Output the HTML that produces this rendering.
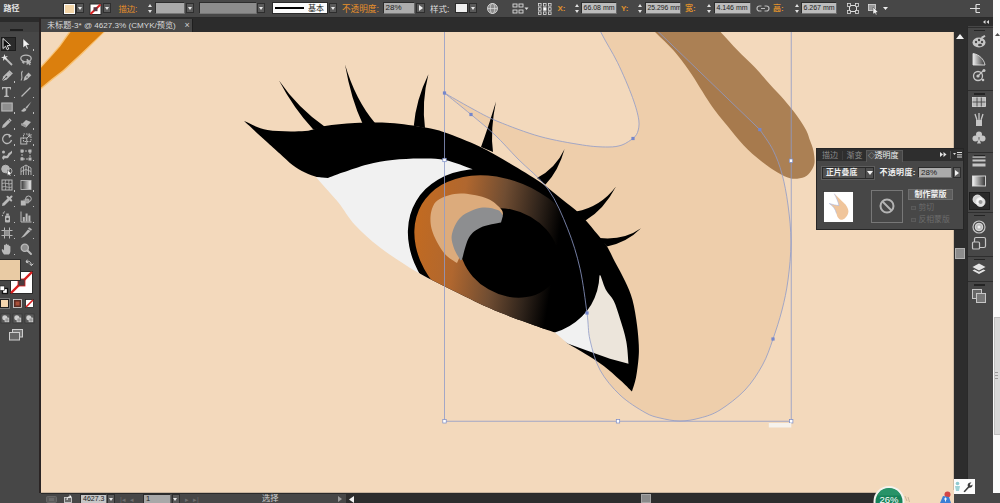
<!DOCTYPE html>
<html><head><meta charset="utf-8"><title>AI</title>
<style>
html,body{margin:0;padding:0}
body{width:1000px;height:503px;position:relative;overflow:hidden;background:#474747;font-family:"Liberation Sans","Noto Sans CJK SC",sans-serif;font-size:9px;color:#ddd}
#art{position:absolute;left:0;top:0;width:1000px;height:503px}

.a{position:absolute}
.t{position:absolute;white-space:nowrap;line-height:1}
.or{color:#e8902a}
.inp{position:absolute;overflow:hidden;background:#bcbcbc;color:#222;box-sizing:border-box;border:1px solid #2c2c2c;border-right-color:#666;border-bottom-color:#777}
.dd{position:absolute;background:#5a5a5a;box-sizing:border-box;border:1px solid #2e2e2e}
.dd:after{content:"";position:absolute;left:50%;top:50%;margin:-1px 0 0 -2.5px;border:2.5px solid transparent;border-top:3px solid #e8e8e8;border-bottom:0}
.sp{position:absolute;width:5px;height:9.5px}
.sp:before{content:"";position:absolute;left:0;top:0;border:2.5px solid transparent;border-bottom:3.5px solid #e0e0e0;border-top:0}
.sp:after{content:"";position:absolute;left:0;bottom:0;border:2.5px solid transparent;border-top:3.5px solid #e0e0e0;border-bottom:0}
svg.ic{position:absolute;overflow:visible}

</style></head><body>
<svg id="art" viewBox="0 0 1000 503">
<defs>
<clipPath id="cv"><rect x="40.8" y="31.7" width="913" height="461.1"/></clipPath>
<linearGradient id="irisg" gradientUnits="userSpaceOnUse" x1="415" y1="250" x2="553.2" y2="272.1" gradientTransform="rotate(-30.65 503.7 252.8)">
<stop offset="0" stop-color="#c06a22"/><stop offset="0.286" stop-color="#b0672f"/><stop offset="0.571" stop-color="#704d32"/><stop offset="0.82" stop-color="#30241b"/><stop offset="1" stop-color="#000"/>
</linearGradient>
<clipPath id="eyeopen"><path d="M316,177 L328,178 C330.4,177.1 335.9,174.8 342.5,172.5 C349.1,170.2 359.2,166.5 367.5,164.4 C375.8,162.3 383.8,161 392.5,160 C401.2,159 411.2,158.5 420,158.5 C428.8,158.5 436.3,158.2 445,160 C453.7,161.8 467.5,167.5 472,169 C490,150 585,205 600.6,275.6 C601.5,278 603.8,285.8 606,290 C608.2,294.2 611.4,296.2 613.8,301 C616.1,305.8 617.9,312.1 620,318.8 C622.1,325.4 624.8,333.5 626.2,341 C627.7,348.5 628.1,360 628.5,363.8 L610,358.75 L591,352 L567.5,343.5 L555,332.5 C545.8,329.2 515.8,318.9 500,312.5 C484.2,306.1 473.8,300.8 460,294 C446.2,287.2 430.3,279.8 417,272 C403.7,264.2 390.3,255.3 380,247.5 C369.7,239.7 361.9,232.4 355,225 C348.1,217.6 344,209.5 338.8,203 C333.5,196.5 327.5,190.3 323.8,186 C320,181.7 317.3,178.5 316,177 Z"/></clipPath>
<path id="nose" d="M444.5,93 C448.9,95.5 462.1,103.2 471,108 C479.9,112.8 486.5,116.8 498,121.5 C509.5,126.2 525.9,132.6 540,136.5 C554.1,140.4 571.2,143.2 582.5,145 C593.8,146.8 601.4,147 608,147 C614.6,147 617.8,146.4 622,145 C626.2,143.6 631.2,139.6 633,138.5 C633.8,137.5 636.5,135.6 637.5,132.5 C638.5,129.4 639.6,125.8 638.8,120 C637.9,114.2 636,107.1 632.5,97.5 C629,87.9 622.8,73.3 617.5,62.5 C612.2,51.7 606.2,42.9 601,32.5 C595.8,22.1 588.5,5.4 586,0 L625.3,0 L759.8,129.6 C762,133 769.3,142.6 773,150 C776.7,157.4 779.5,164.8 782,174 C784.5,183.2 786.5,193.7 788,205 C789.5,216.3 791,229.5 791,242 C791,254.5 789.5,268.7 788,280 C786.5,291.3 784.5,300.2 782,310 C779.5,319.8 776.2,329.8 773,339 C769.8,348.2 767.2,356.5 762.5,365 C757.8,373.5 752.1,382.5 745,390 C737.9,397.5 727.5,405.3 720,410 C712.5,414.7 706.7,416.2 700,418 C693.3,419.8 686.7,421 680,421 C673.3,421 665.8,419.4 660,418 C654.2,416.6 651.7,416.3 645,412.5 C638.3,408.7 627.5,402.1 620,395 C612.5,387.9 605,379.2 600,370 C595,360.8 592.2,349.5 590,340 C587.8,330.5 588.7,324.9 587,313 C585.3,301.1 583.2,282.5 580,268.5 C576.8,254.5 573,242.1 567.7,228.8 C562.4,215.6 556.3,200.6 548,189 C539.7,177.4 526.8,168 518,159 C509.2,150 502.8,142.4 495,135 C487.2,127.6 479.4,121.5 471,114.5 C462.6,107.5 448.9,96.6 444.5,93 Z"/>
</defs>
<g clip-path="url(#cv)">
<rect x="40" y="31" width="915" height="463" fill="#f3d9bc"/>
<polygon points="69.500,31 105.800,31 81.900,54.600 63.800,71.300 52.700,79.800 40,90.300 40,67 50.300,56 59,46" fill="#f9c272"/>
<polygon points="71.300,31 104.500,31 80.900,53.600 62.800,70.300 51.700,78.700 40,88.400 40,69 50.300,57.800 60,46.700" fill="#db7f0d"/>
<path d="M634,10 C637.5,13.7 648.7,25.5 655.3,32.2 C661.9,38.9 667.6,43.7 673.4,50.3 C679.2,56.9 683.9,63.1 690,72 C696.1,80.8 703.9,94.5 710,103.4 C716.1,112.3 721.3,118.3 726.9,125.3 C732.5,132.3 738.2,139.7 743.8,145.6 C749.4,151.5 755.1,156.3 760.7,160.8 C766.3,165.3 772.6,169.7 777.6,172.6 C782.6,175.5 786.5,177.8 791,178.5 C795.5,179.2 801.3,178.2 804.6,176.9 C807.9,175.7 809.4,173.3 811,171 C812.6,168.7 814.1,166.3 814.5,163 C814.9,159.7 814.2,154.8 813.5,151 C812.8,147.2 811.2,143.9 810,140.5 C808.8,137.1 808.3,134.3 806.3,130.4 C804.3,126.5 801.5,122 797.8,116.9 C794.1,111.8 788.9,105.4 784.3,100 C779.7,94.6 774.9,89.9 770,84.5 C765.1,79.1 760.4,73.2 755,67.5 C749.6,61.8 743.2,56.2 737.5,50.3 C731.8,44.4 727,38.9 720.8,32.2 C714.5,25.5 703.5,13.7 700,10 Z" fill="#ab8054"/>
<path d="M243.8,120.8 C247.7,122.3 257.3,128.3 267.5,130 C277.7,131.7 295.4,131.7 305,131 C314.6,130.3 316.7,127.3 325,126 C333.3,124.7 344.2,123.5 355,123 C365.8,122.5 378.3,122.2 390,123 C401.7,123.8 415.8,125.9 425,127.5 C434.2,129.1 435.9,129.3 445,132.5 C454.1,135.7 468.7,141.3 479.5,146.5 C490.3,151.7 499.9,157.6 510,163.5 C520.1,169.4 531.5,176.2 540,182 C548.5,187.8 554.3,193.2 561,198.5 C567.7,203.8 574.4,208.6 580,214 C585.6,219.4 590,225.4 594.4,230.7 C598.8,235.9 603,240.3 606.4,245.5 C609.8,250.7 611.9,256.1 615,262 C618.1,267.9 622.1,274.7 625,281 C627.9,287.3 630.5,292.7 632.5,300 C634.5,307.3 636,317.5 637,325 C638,332.5 638.5,339.4 638.8,345 C639,350.6 639,353.3 638.5,358.8 C638,364.2 637.1,372 636,377.5 C634.9,383 632.7,389.2 632,391.5 C630,389.6 624.7,384.2 620,380 C615.3,375.8 609.6,370.4 603.8,366 C597.9,361.6 591,357.5 585,353.8 C579,350 570.4,345.2 567.5,343.5 L556.5,330.0 C547.3,326.7 517.3,316.4 501.5,310 C485.7,303.6 475.3,298.2 461.5,291.5 C447.7,284.8 431.8,277.2 418.5,269.5 C405.2,261.8 391.8,252.8 381.5,245 C371.2,237.2 363.4,229.9 356.5,222.5 C349.6,215.1 345.5,207 340.2,200.5 C335,194 329,187.8 325.2,183.5 C321.5,179.2 318.8,176 317.5,174.5 L328,178 C326.2,177.9 321.3,178.2 317.5,177.2 C313.7,176.3 309.2,174.5 305,172.5 C300.8,170.5 296.7,168.1 292.5,165 C288.3,161.9 284.2,157.5 280,153.8 C275.8,150 273.5,148 267.5,142.5 C261.5,137 247.7,124.4 243.8,120.8 Z" fill="#000"/>
<path d="M279,80.4 Q293.5,108 313.3,129.5 L325.5,127.3 Q297.5,107.5 279,80.4 Z" fill="#000"/>
<path d="M345,64.5 Q351,99 362.5,123.5 L375,123 Q355.5,100 345,64.5 Z" fill="#000"/>
<path d="M428.4,74.3 Q416,100 413.8,125.8 L425,128 Q421.5,102 428.4,74.3 Z" fill="#000"/>
<path d="M496,101.5 Q488,128 481,147 L493,152 Q490,130 496,101.5 Z" fill="#000"/>
<path d="M564.6,149 Q555.5,168.5 537,178 L545.5,184.5 Q558.5,171 564.6,149 Z" fill="#000"/>
<path d="M616,186.5 Q600.5,207 576,211.6 L585.5,220.5 Q604,209.5 616,186.5 Z" fill="#000"/>
<path d="M641,228.3 Q624,240.5 599.5,238 L607,246.5 Q627,242.5 641,228.3 Z" fill="#000"/>

<path d="M316,177 L328,178 C330.4,177.1 335.9,174.8 342.5,172.5 C349.1,170.2 359.2,166.5 367.5,164.4 C375.8,162.3 383.8,161 392.5,160 C401.2,159 411.2,158.5 420,158.5 C428.8,158.5 436.3,158.2 445,160 C453.7,161.8 467.5,167.5 472,169 L490,200 L480,290 L460,294 C452.8,290.3 430.3,279.8 417,272 C403.7,264.2 390.3,255.3 380,247.5 C369.7,239.7 361.9,232.4 355,225 C348.1,217.6 344,209.5 338.8,203 C333.5,196.5 327.5,190.3 323.8,186 C320,181.7 317.3,178.5 316,177 Z" fill="#f1f1f1"/>
<path d="M600.6,275.6 C601.5,278 603.8,285.8 606,290 C608.2,294.2 611.4,296.2 613.8,301 C616.1,305.8 617.9,312.1 620,318.8 C622.1,325.4 624.8,333.5 626.2,341 C627.7,348.5 628.1,360 628.5,363.8 L610,358.75 L591,352 L567.5,343.5 L555,332.5 L540,320 L570,270 Z" fill="#f1f1f1"/>
<g clip-path="url(#eyeopen)">
<ellipse cx="503.700" cy="252.800" rx="101.700" ry="76.700" transform="rotate(30.65 503.7 252.8)" fill="#000"/>
<ellipse cx="503.700" cy="252.800" rx="95.200" ry="70.200" transform="rotate(30.65 503.7 252.8)" fill="url(#irisg)"/>
<ellipse cx="509.500" cy="253" rx="52" ry="42" transform="rotate(30 509.5 253)" fill="#000"/>
<path d="M457,263 C455.1,261.7 449.1,258.4 445.8,255 C442.5,251.6 439.8,247.1 437.4,242.7 C435,238.3 432.6,232.8 431.5,228.4 C430.4,224 430.3,220.1 430.5,216.5 C430.7,212.9 431.6,209.7 432.7,207 C433.8,204.3 434.7,202.4 437.4,200.4 C440.1,198.4 444.6,196.3 449,195.2 C453.4,194.1 457.6,193 464,193.6 C470.4,194.2 481.4,196.1 487.6,198.7 C493.8,201.2 498.4,206.2 501,208.9 C503.6,211.6 502.7,214 503,215 L485,225 L465,245 Z" fill="#dcab7c"/>
<path d="M502,214.500 L499.500,220.500 L480,225.500 L467.500,236 L463.500,246 L461,258.500 L490,272 L522,232 Z" fill="#000"/>
<path d="M460.5,260.5 C459.4,258.4 455.2,252.1 453.8,247.7 C452.4,243.3 450.8,239.1 452,234 C453.2,228.9 456.2,221.4 461,217 C465.8,212.6 474.7,209 480.8,207.8 C486.9,206.6 494,208.6 497.7,209.9 C501.4,211.2 502.1,214.7 503,215.6 L501,222.4 C497.6,223.2 486.1,224.9 480.8,227.4 C475.5,229.9 472.1,232.2 469,237.6 C465.9,242.9 463.2,255.8 462,259.5 Z" fill="#8d8e90"/>
</g>
<use href="#nose" fill="#ecd5ad" fill-opacity="0.28" style="mix-blend-mode:multiply"/>
<use href="#nose" fill="none" stroke="#8e9bc9" stroke-width="0.8"/>
<path d="M444.500,31 V421.250 H791.250 V31" fill="none" stroke="#8e9bc9" stroke-width="0.8"/>
<rect x="442.9" y="91.4" width="3.200" height="3.200" fill="#7587cc"/><rect x="469.4" y="112.9" width="3.200" height="3.200" fill="#7587cc"/><rect x="631.4" y="136.9" width="3.200" height="3.200" fill="#7587cc"/><rect x="758.2" y="128" width="3.200" height="3.200" fill="#7587cc"/><rect x="585.4" y="311.4" width="3.200" height="3.200" fill="#7587cc"/><rect x="771.4" y="337.4" width="3.200" height="3.200" fill="#7587cc"/><rect x="442.8" y="158.3" width="3.400" height="3.400" fill="#fff" stroke="#7a8cc8" stroke-width="0.700"/><rect x="442.8" y="419.6" width="3.400" height="3.400" fill="#fff" stroke="#7a8cc8" stroke-width="0.700"/><rect x="616.3" y="419.6" width="3.400" height="3.400" fill="#fff" stroke="#7a8cc8" stroke-width="0.700"/><rect x="789.5" y="419.6" width="3.400" height="3.400" fill="#fff" stroke="#7a8cc8" stroke-width="0.700"/><rect x="789.3" y="159" width="3.400" height="3.400" fill="#fff" stroke="#7a8cc8" stroke-width="0.700"/><rect x="768.8" y="423" width="22.500" height="4.500" fill="#f6f2ec"/>
</g>
</svg>
<div class="a" style="left:0px;top:0px;width:1000px;height:17.5px;background:#474747;border-bottom:1px solid #2a2a2a;box-sizing:border-box"></div>
<div class="t " style="left:3.5px;top:4.5px;font-size:8px;color:#e6e6e6;font-weight:bold">路径</div>
<div class="a" style="left:63.5px;top:3.5px;width:11px;height:10.5px;background:#f3d5a7;border:1px solid #fafafa;box-sizing:border-box;outline:1px solid #2b2b2b"></div>
<div class="dd" style="left:76px;top:2.5px;width:8px;height:10.5px"></div>
<svg class="ic" style="left:89.5px;top:3.5px" width="11" height="10.5" viewBox="0 0 11 10.5"><rect x="0" y="0" width="11" height="10.5" fill="#fff" stroke="#2b2b2b" stroke-width="1"/><line x1="0.5" y1="10" x2="10.5" y2="0.5" stroke="#d22" stroke-width="2"/><rect x="3.5" y="3.200" width="4" height="4" fill="#5a3540"/></svg>
<div class="dd" style="left:103px;top:2.5px;width:8px;height:10.5px"></div>
<div class="t or" style="left:118.5px;top:4.5px;font-size:8.3px;">描边:</div>
<div class="sp" style="left:147.5px;top:3.5px"></div>
<div class="inp" style="left:154.5px;top:2px;width:30px;height:11.5px;font-size:8px;line-height:9.5px;background:#a9a9a9;"><span style="position:absolute;left:2px;top:0;white-space:nowrap"></span></div>
<div class="dd" style="left:186px;top:2.5px;width:8px;height:10.5px"></div>
<div class="inp" style="left:198.5px;top:2px;width:58px;height:11.5px;font-size:8px;line-height:9.5px;background:#8c8c8c;"><span style="position:absolute;left:2px;top:0;white-space:nowrap"></span></div>
<div class="dd" style="left:257px;top:2.5px;width:8px;height:10.5px"></div>
<div class="a" style="left:271.5px;top:2px;width:56px;height:11.5px;background:#fbfbfb;border:1px solid #2b2b2b;box-sizing:border-box"></div>
<div class="a" style="left:275px;top:7px;width:28.5px;height:2px;background:#000;"></div>
<div class="t " style="left:308px;top:4.5px;font-size:8px;color:#222;">基本</div>
<div class="dd" style="left:329px;top:2.5px;width:8px;height:10.5px"></div>
<div class="t or" style="left:342px;top:4.5px;font-size:8.6px;">不透明度:</div>
<div class="inp" style="left:382.5px;top:2px;width:32px;height:11.5px;font-size:8px;line-height:9.5px;background:#adadad;"><span style="position:absolute;left:2px;top:0;white-space:nowrap">28%</span></div>
<div class="a" style="left:416px;top:2.5px;width:8.5px;height:10.5px;background:#5a5a5a;border:1px solid #2e2e2e;box-sizing:border-box"></div>
<svg class="ic" style="left:418.5px;top:5px" width="4" height="6" viewBox="0 0 4 6"><path d="M0,0 L4,3 L0,6 Z" fill="#eee"/></svg>
<div class="t " style="left:430px;top:4.5px;font-size:8.5px;color:#ddd;">样式:</div>
<div class="a" style="left:454.5px;top:2.5px;width:13px;height:10.5px;background:#efefef;border:1px solid #2b2b2b;box-sizing:border-box"></div>
<div class="dd" style="left:469px;top:2.5px;width:8px;height:10.5px"></div>
<svg class="ic" style="left:487px;top:3px" width="11" height="11" viewBox="0 0 11 11"><circle cx="5.500" cy="5.500" r="5" fill="#8a8a8a" stroke="#d0d0d0" stroke-width="1"/><ellipse cx="5.500" cy="5.500" rx="2.200" ry="5" fill="none" stroke="#ddd" stroke-width="0.7"/><line x1="0.500" y1="5.500" x2="10.500" y2="5.500" stroke="#ddd" stroke-width="0.7"/></svg>
<svg class="ic" style="left:513px;top:3px" width="16" height="11" viewBox="0 0 16 11"><rect x="0" y="1" width="4" height="3" fill="none" stroke="#ddd" stroke-width="0.9"/><rect x="6" y="1" width="4" height="3" fill="none" stroke="#ddd" stroke-width="0.9"/><rect x="0" y="7" width="4" height="3" fill="none" stroke="#ddd" stroke-width="0.9"/><rect x="6" y="7" width="4" height="3" fill="none" stroke="#ddd" stroke-width="0.9"/><path d="M11.500,4.500 h4 l-2,2.500 z" fill="#ddd"/></svg>
<svg class="ic" style="left:538px;top:2.5px" width="14" height="12" viewBox="0 0 14 12"><rect x="0.5" y="0.5" width="2.600" height="2.600" fill="none" stroke="#ddd" stroke-width="0.8"/><rect x="0.5" y="4.7" width="2.600" height="2.600" fill="none" stroke="#ddd" stroke-width="0.8"/><rect x="0.5" y="8.9" width="2.600" height="2.600" fill="none" stroke="#ddd" stroke-width="0.8"/><rect x="5.5" y="0.5" width="2.600" height="2.600" fill="none" stroke="#ddd" stroke-width="0.8"/><rect x="5.5" y="4.7" width="2.600" height="2.600" fill="#fff" stroke="#ddd" stroke-width="0.8"/><rect x="5.5" y="8.9" width="2.600" height="2.600" fill="none" stroke="#ddd" stroke-width="0.8"/><rect x="10.5" y="0.5" width="2.600" height="2.600" fill="none" stroke="#ddd" stroke-width="0.8"/><rect x="10.5" y="4.7" width="2.600" height="2.600" fill="none" stroke="#ddd" stroke-width="0.8"/><rect x="10.5" y="8.9" width="2.600" height="2.600" fill="none" stroke="#ddd" stroke-width="0.8"/></svg>
<div class="t " style="left:557.5px;top:4.5px;font-size:8px;color:#e0912c;font-weight:bold">X:</div>
<div class="sp" style="left:574.5px;top:3.5px"></div>
<div class="inp" style="left:580.5px;top:2px;width:36.5px;height:11.5px;font-size:7px;line-height:9.5px;"><span style="position:absolute;left:2px;top:0;white-space:nowrap">66.08 mm</span></div>
<div class="t " style="left:621px;top:4.5px;font-size:8px;color:#e0912c;font-weight:bold">Y:</div>
<div class="sp" style="left:637.5px;top:3.5px"></div>
<div class="inp" style="left:644.5px;top:2px;width:36px;height:11.5px;font-size:6.8px;line-height:9.5px;"><span style="position:absolute;left:2px;top:0;white-space:nowrap">25.296 mm</span></div>
<div class="t " style="left:685px;top:4.5px;font-size:8px;color:#e0912c;font-weight:bold">宽:</div>
<div class="sp" style="left:706.5px;top:3.5px"></div>
<div class="inp" style="left:713.5px;top:2px;width:37.5px;height:11.5px;font-size:7px;line-height:9.5px;"><span style="position:absolute;left:2px;top:0;white-space:nowrap">4.146 mm</span></div>
<svg class="ic" style="left:757px;top:4px" width="12" height="9" viewBox="0 0 12 9"><path d="M4.500,2 h-2 a2.500,2.500 0 0 0 0,5 h2 M7.500,2 h2 a2.500,2.500 0 0 1 0,5 h-2 M4,4.500 h4" fill="none" stroke="#bbb" stroke-width="1.200"/></svg>
<div class="t " style="left:773px;top:4.5px;font-size:8px;color:#e0912c;font-weight:bold">高:</div>
<div class="sp" style="left:794.5px;top:3.5px"></div>
<div class="inp" style="left:800.5px;top:2px;width:36.5px;height:11.5px;font-size:7px;line-height:9.5px;"><span style="position:absolute;left:2px;top:0;white-space:nowrap">6.267 mm</span></div>
<svg class="ic" style="left:847px;top:3px" width="12" height="11" viewBox="0 0 12 11"><rect x="2.500" y="2.500" width="7" height="6" fill="none" stroke="#ddd" stroke-width="1"/><rect x="0.500" y="0.500" width="3" height="3" fill="#464646" stroke="#ddd" stroke-width="0.8"/><rect x="8.500" y="0.500" width="3" height="3" fill="#464646" stroke="#ddd" stroke-width="0.8"/><rect x="0.500" y="7.500" width="3" height="3" fill="#464646" stroke="#ddd" stroke-width="0.8"/><rect x="8.500" y="7.500" width="3" height="3" fill="#464646" stroke="#ddd" stroke-width="0.8"/></svg>
<svg class="ic" style="left:868px;top:3px" width="21" height="11" viewBox="0 0 21 11"><rect x="0.500" y="1.500" width="7" height="6" fill="#999" stroke="#ddd" stroke-width="0.8"/><path d="M5,4 l5,5 -2,0.500 1,2 -1,0.500 -1,-2 -2,1 z" fill="#eee" stroke="#333" stroke-width="0.400"/><path d="M15,4 h5 l-2.500,3 z" fill="#eee"/></svg>
<svg class="ic" style="left:970px;top:3px" width="11" height="11" viewBox="0 0 11 11"><path d="M0,5.500 h6 M6,1.500 v8 M6,1.500 h4 M6,5.500 h4 M6,9.500 h4" fill="none" stroke="#ddd" stroke-width="1.200"/></svg>
<div class="a" style="left:0px;top:17.5px;width:967px;height:14.2px;background:#2c2c2c;"></div>
<div class="a" style="left:41px;top:18.5px;width:152px;height:13.2px;background:#474747;border-right:1px solid #1f1f1f;box-sizing:border-box"></div>
<div class="t " style="left:47px;top:21.5px;font-size:8.1px;color:#dadada;">未标题-3* @ 4627.3% (CMYK/预览)</div>
<div class="t " style="left:184.5px;top:20.5px;font-size:9px;color:#cfcfcf;">×</div>
<div class="a" style="left:0px;top:17.5px;width:40.8px;height:486px;background:#474747;border-right:2px solid #2a2424;box-sizing:border-box"></div>
<div class="a" style="left:0px;top:17.5px;width:38.8px;height:4px;background:#2b2b2b;"></div>
<div class="a" style="left:0px;top:21.5px;width:38.8px;height:10px;background:#404040;"></div>
<div class="a" style="left:10px;top:29px;width:12.5px;height:1.5px;background:#1f1f1f;"></div>
<div class="a" style="left:0.5px;top:37px;width:15.5px;height:14px;background:#2b2b2b;border:1px solid #1c1c1c;box-sizing:border-box"></div>
<svg class="ic" style="left:0.5px;top:38px" width="12" height="12" viewBox="0 0 12 12"><path d="M2,0.500 L2,10.500 L4.600,8.200 L6.200,11.800 L7.800,11 L6.200,7.600 L9.600,7.400 Z" fill="#111" stroke="#eee" stroke-width="0.900"/></svg>
<svg class="ic" style="left:19.5px;top:38px" width="12" height="12" viewBox="0 0 12 12"><path d="M3,0.500 L3,10 L5.400,7.900 L6.900,11.300 L8.300,10.600 L6.800,7.300 L10,7.100 Z" fill="#f4f4f4" stroke="#222" stroke-width="0.500"/></svg>
<div class="a" style="left:32.5px;top:49px;width:1.5px;height:1.5px;background:#bdbdbd;"></div>
<svg class="ic" style="left:0.5px;top:54px" width="12" height="12" viewBox="0 0 12 12"><path d="M4.500,4.500 L11,11" stroke="#b9b9b9" stroke-width="1.800"/><path d="M3.500,0 L4.300,2.500 L7,2 L5,3.800 L6.500,6.200 L3.900,5 L2,7 L2.300,4.300 L0,3.300 L2.600,2.700 Z" fill="#e6e6e6"/></svg>
<svg class="ic" style="left:19.5px;top:54px" width="12" height="12" viewBox="0 0 12 12"><ellipse cx="6" cy="4.500" rx="5.200" ry="3.400" fill="none" stroke="#b9b9b9" stroke-width="1.300"/><path d="M3,7 C1.500,8.500 3,10 4.500,9 M7,5 L7,10.500 L8.500,9 L9.500,11 L10.300,10.600 L9.400,8.600 L11,8.500 Z" fill="#b9b9b9" stroke="#b9b9b9" stroke-width="0.800"/></svg>
<svg class="ic" style="left:0.5px;top:70px" width="12" height="12" viewBox="0 0 12 12"><path d="M1,11 L2.200,6.500 L7.500,1.200 L10.800,4.500 L5.500,9.800 Z" fill="#b9b9b9"/><path d="M1,11 L5,7" stroke="#474747" stroke-width="0.800"/><circle cx="5.400" cy="6.600" r="0.900" fill="#474747"/><path d="M8,0.700 L11.300,4" stroke="#b9b9b9" stroke-width="1.600"/></svg>
<svg class="ic" style="left:19.5px;top:70px" width="12" height="12" viewBox="0 0 12 12"><path d="M3.500,11 L4.500,7 L8.500,2.500 L11.300,5.300 L7,9.500 Z" fill="#b9b9b9"/><circle cx="7" cy="7" r="0.800" fill="#474747"/><path d="M2.500,1 C-0.500,4 4,6 1,10.500" fill="none" stroke="#b9b9b9" stroke-width="1.100"/></svg>
<div class="a" style="left:13.5px;top:81px;width:1.5px;height:1.5px;background:#bdbdbd;"></div>
<svg class="ic" style="left:0.5px;top:85.5px" width="12" height="12" viewBox="0 0 12 12"><path d="M1,1 H10 V3.400 H9.200 L8.800,2.200 H6.400 V9.600 L7.800,10 V11 H3.200 V10 L4.600,9.600 V2.200 H2.200 L1.800,3.400 H1 Z" fill="#b9b9b9"/></svg>
<svg class="ic" style="left:19.5px;top:85.5px" width="12" height="12" viewBox="0 0 12 12"><path d="M1.500,10.500 L10.500,1.500" stroke="#b9b9b9" stroke-width="1.300"/></svg>
<div class="a" style="left:13.5px;top:96.5px;width:1.5px;height:1.5px;background:#bdbdbd;"></div>
<div class="a" style="left:32.5px;top:96.5px;width:1.5px;height:1.5px;background:#bdbdbd;"></div>
<svg class="ic" style="left:0.5px;top:101px" width="12" height="12" viewBox="0 0 12 12"><rect x="0.800" y="2" width="10.400" height="8" fill="#8e8e8e" stroke="#b9b9b9" stroke-width="1.100"/></svg>
<svg class="ic" style="left:19.5px;top:101px" width="12" height="12" viewBox="0 0 12 12"><path d="M11.500,0.500 L5.500,6.500 L6.800,7.800 Z" fill="#b9b9b9"/><path d="M5,7 C3,7 2.800,9 1,10 C3,11.500 6.500,10.500 6.300,8.200 Z" fill="#b9b9b9"/></svg>
<div class="a" style="left:13.5px;top:112px;width:1.5px;height:1.5px;background:#bdbdbd;"></div>
<div class="a" style="left:32.5px;top:112px;width:1.5px;height:1.5px;background:#bdbdbd;"></div>
<svg class="ic" style="left:0.5px;top:117px" width="12" height="12" viewBox="0 0 12 12"><path d="M1,11 L1.800,8 L8.500,1.300 L10.700,3.500 L4,10.200 Z" fill="#b9b9b9"/><path d="M7.300,2.500 L9.500,4.700" stroke="#474747" stroke-width="0.700"/></svg>
<svg class="ic" style="left:19.5px;top:117px" width="12" height="12" viewBox="0 0 12 12"><path d="M1,8 L6,3 L11,5 L6,10.500 Z" fill="#b9b9b9"/><path d="M1,8 L6,10.500 L6,8 L1.200,6 Z" fill="#9a9a9a"/></svg>
<div class="a" style="left:13.5px;top:128px;width:1.5px;height:1.5px;background:#bdbdbd;"></div>
<div class="a" style="left:32.5px;top:128px;width:1.5px;height:1.5px;background:#bdbdbd;"></div>
<svg class="ic" style="left:0.5px;top:133px" width="12" height="12" viewBox="0 0 12 12"><path d="M9.500,3 A4.500,4.500 0 1 0 10.500,7" fill="none" stroke="#b9b9b9" stroke-width="1.300"/><path d="M7.200,0.800 L11,2.800 L8,5 Z" fill="#b9b9b9"/></svg>
<svg class="ic" style="left:19.5px;top:133px" width="12" height="12" viewBox="0 0 12 12"><rect x="0.800" y="5" width="6" height="6" fill="none" stroke="#b9b9b9" stroke-width="1"/><rect x="3.500" y="1" width="7.500" height="7.500" fill="none" stroke="#b9b9b9" stroke-width="1" stroke-dasharray="1.500,1"/><path d="M6.500,5.500 L10,2 M10,2 h-2.500 M10,2 v2.500" stroke="#b9b9b9" stroke-width="1" fill="none"/></svg>
<div class="a" style="left:13.5px;top:144px;width:1.5px;height:1.5px;background:#bdbdbd;"></div>
<div class="a" style="left:32.5px;top:144px;width:1.5px;height:1.5px;background:#bdbdbd;"></div>
<svg class="ic" style="left:0.5px;top:148.5px" width="12" height="12" viewBox="0 0 12 12"><path d="M1,9 C3,3 5,10 7,5 C8,3 9,4 11,1.500 L11,4 C9,6 9,6 8,7.500 C6,11.500 4,7 2.500,11 Z" fill="#b9b9b9"/><circle cx="2.500" cy="3" r="1.500" fill="#b9b9b9"/></svg>
<svg class="ic" style="left:19.5px;top:148.5px" width="12" height="12" viewBox="0 0 12 12"><rect x="2" y="2" width="8" height="8" fill="none" stroke="#b9b9b9" stroke-width="1" stroke-dasharray="2,1"/><rect x="0.500" y="0.500" width="3" height="3" fill="#b9b9b9"/><rect x="8.500" y="0.500" width="3" height="3" fill="#b9b9b9"/><rect x="0.500" y="8.500" width="3" height="3" fill="#b9b9b9"/><rect x="8.500" y="8.500" width="3" height="3" fill="#b9b9b9"/></svg>
<div class="a" style="left:13.5px;top:159.5px;width:1.5px;height:1.5px;background:#bdbdbd;"></div>
<div class="a" style="left:32.5px;top:159.5px;width:1.5px;height:1.5px;background:#bdbdbd;"></div>
<svg class="ic" style="left:0.5px;top:163.5px" width="12" height="12" viewBox="0 0 12 12"><circle cx="4.500" cy="5" r="3.800" fill="#b5b5b5" stroke="#b9b9b9" stroke-width="0.900"/><circle cx="8" cy="7" r="3" fill="none" stroke="#b9b9b9" stroke-width="0.900"/><path d="M6.500,6 L6.500,11.800 L8,10.400 L9,12 L10,11.500 L9,10 L10.800,9.800 Z" fill="#fff" stroke="#333" stroke-width="0.400"/></svg>
<svg class="ic" style="left:19.5px;top:163.5px" width="12" height="12" viewBox="0 0 12 12"><path d="M1,11 L1,4 L6,1 L11,4 L11,11 M6,1 V11 M1,7.500 L6,5.500 L11,7.500 M3.500,2.500 V11 M8.500,2.500 V11" fill="none" stroke="#b9b9b9" stroke-width="0.900"/></svg>
<div class="a" style="left:13.5px;top:174.5px;width:1.5px;height:1.5px;background:#bdbdbd;"></div>
<div class="a" style="left:32.5px;top:174.5px;width:1.5px;height:1.5px;background:#bdbdbd;"></div>
<svg class="ic" style="left:0.5px;top:179px" width="12" height="12" viewBox="0 0 12 12"><rect x="1" y="1" width="10" height="10" fill="none" stroke="#b9b9b9" stroke-width="1"/><path d="M1,4.500 C4,3 8,6 11,4.500 M1,8 C4,6.500 8,9.500 11,8 M4.500,1 C3.500,4 5.500,8 4.500,11 M8,1 C7,4 9,8 8,11" fill="none" stroke="#b9b9b9" stroke-width="0.800"/></svg>
<svg class="ic" style="left:19.5px;top:179px" width="12" height="12" viewBox="0 0 12 12"><defs><linearGradient id="tg" x1="0" x2="1" y1="0" y2="0"><stop offset="0" stop-color="#333"/><stop offset="1" stop-color="#f2f2f2"/></linearGradient></defs><rect x="1" y="1.500" width="10" height="9" fill="url(#tg)" stroke="#b9b9b9" stroke-width="0.900"/></svg>
<div class="a" style="left:13.5px;top:190px;width:1.5px;height:1.5px;background:#bdbdbd;"></div>
<div class="a" style="left:32.5px;top:190px;width:1.5px;height:1.5px;background:#bdbdbd;"></div>
<svg class="ic" style="left:0.5px;top:194.5px" width="12" height="12" viewBox="0 0 12 12"><path d="M1,11 L1.500,8.500 L7,3 L9,5 L3.500,10.500 Z" fill="#b9b9b9"/><path d="M6.500,1.800 L10.200,5.500 M8.300,3.700 L10.500,1.500" stroke="#b9b9b9" stroke-width="2" stroke-linecap="round"/></svg>
<svg class="ic" style="left:19.5px;top:194.5px" width="12" height="12" viewBox="0 0 12 12"><rect x="0.800" y="5.500" width="5" height="5" fill="#b9b9b9"/><circle cx="8.500" cy="3.800" r="2.800" fill="none" stroke="#b9b9b9" stroke-width="1"/><path d="M3.500,5 L6.500,3.500" stroke="#b9b9b9" stroke-width="0.800" stroke-dasharray="1,0.800"/><rect x="5" y="4" width="4" height="4" rx="1" fill="#9a9a9a" stroke="#b9b9b9" stroke-width="0.700"/></svg>
<div class="a" style="left:13.5px;top:205.5px;width:1.5px;height:1.5px;background:#bdbdbd;"></div>
<div class="a" style="left:32.5px;top:205.5px;width:1.5px;height:1.5px;background:#bdbdbd;"></div>
<svg class="ic" style="left:0.5px;top:210.5px" width="12" height="12" viewBox="0 0 12 12"><rect x="4" y="4.500" width="5" height="7" rx="1" fill="#b9b9b9"/><rect x="5.200" y="2.500" width="2.600" height="2" fill="#b9b9b9"/><circle cx="2.500" cy="2" r="0.800" fill="#b9b9b9"/><circle cx="1.500" cy="4.500" r="0.700" fill="#b9b9b9"/><circle cx="3.500" cy="0.800" r="0.600" fill="#b9b9b9"/><circle cx="6.500" cy="8" r="1.300" fill="#474747"/></svg>
<svg class="ic" style="left:19.5px;top:210.5px" width="12" height="12" viewBox="0 0 12 12"><path d="M1,0.500 V11 H11.500" fill="none" stroke="#b9b9b9" stroke-width="1"/><rect x="2.800" y="6" width="2" height="4.500" fill="#b9b9b9"/><rect x="5.600" y="2.500" width="2" height="8" fill="#b9b9b9"/><rect x="8.400" y="4.500" width="2" height="6" fill="#b9b9b9"/></svg>
<div class="a" style="left:13.5px;top:221.5px;width:1.5px;height:1.5px;background:#bdbdbd;"></div>
<div class="a" style="left:32.5px;top:221.5px;width:1.5px;height:1.5px;background:#bdbdbd;"></div>
<svg class="ic" style="left:0.5px;top:226.5px" width="12" height="12" viewBox="0 0 12 12"><path d="M3.500,0.500 V11.500 M8.500,0.500 V11.500 M0.500,3.500 H11.500 M0.500,8.500 H11.500" fill="none" stroke="#b9b9b9" stroke-width="1"/><rect x="3.500" y="3.500" width="5" height="5" fill="#8e8e8e"/></svg>
<svg class="ic" style="left:19.5px;top:226.5px" width="12" height="12" viewBox="0 0 12 12"><path d="M1,11 L8,2.500 L10.500,4 L4.500,9.500 Z" fill="#b9b9b9"/><path d="M8.500,1 L11.500,3 " stroke="#b9b9b9" stroke-width="1.800"/></svg>
<div class="a" style="left:13.5px;top:237.5px;width:1.5px;height:1.5px;background:#bdbdbd;"></div>
<div class="a" style="left:32.5px;top:237.5px;width:1.5px;height:1.5px;background:#bdbdbd;"></div>
<svg class="ic" style="left:0.5px;top:242.5px" width="12" height="12" viewBox="0 0 12 12"><path d="M3,11.500 C1.500,9.500 0.500,7.500 0.800,6.500 C1.300,5.800 2.300,6.500 3,7.500 L3,2.500 C3,1.500 4.400,1.500 4.400,2.500 L4.600,1.500 C4.800,0.500 6.100,0.600 6.100,1.600 L6.300,2 C6.600,1.200 7.800,1.300 7.800,2.300 L8,3.200 C8.400,2.600 9.400,2.800 9.400,3.700 L9.400,8 C9.400,10 8.500,11 8,11.500 Z" fill="#b9b9b9"/></svg>
<svg class="ic" style="left:19.5px;top:242.5px" width="12" height="12" viewBox="0 0 12 12"><circle cx="4.800" cy="4.800" r="3.600" fill="#8e8e8e" stroke="#b9b9b9" stroke-width="1.300"/><path d="M7.500,7.500 L11,11" stroke="#b9b9b9" stroke-width="2" stroke-linecap="round"/></svg>
<div class="a" style="left:13.5px;top:253.5px;width:1.5px;height:1.5px;background:#bdbdbd;"></div>
<svg class="ic" style="left:9.5px;top:270.5px" width="23" height="23" viewBox="0 0 23 23"><rect x="0.500" y="0.500" width="22" height="22" fill="#fff" stroke="#2b2b2b"/><path d="M1,22 L22,1" stroke="#d81e1e" stroke-width="2.400"/><rect x="8" y="8" width="7" height="7" fill="#4b3b3e" stroke="#d81e1e" stroke-width="0.800"/></svg>
<div class="a" style="left:0px;top:259px;width:20.5px;height:21.5px;background:#e9cba4;border:1px solid #2b2b2b;border-left:0;box-sizing:border-box"></div>
<svg class="ic" style="left:25px;top:258.5px" width="9" height="9" viewBox="0 0 9 9"><path d="M1,3 C4,1 6,3 6.500,6.500 M6.500,6.500 l-2,-1.500 M6.500,6.500 l1.800,-1.800 M1,3 l2.500,1 M1,3 l1.300,-2.300" fill="none" stroke="#cdcdcd" stroke-width="1"/></svg>
<svg class="ic" style="left:0px;top:286px" width="8" height="8" viewBox="0 0 8 8"><rect x="2.500" y="2.500" width="5" height="5" fill="#fff" stroke="#111" stroke-width="1.300"/><rect x="0" y="0" width="4.500" height="4.500" fill="#fff" stroke="#111" stroke-width="0.600"/></svg>
<div class="a" style="left:0px;top:299px;width:9px;height:9px;background:#f3d5ae;border:1px solid #1e1e1e;box-sizing:border-box;outline:1px solid #777"></div>
<svg class="ic" style="left:12.5px;top:299px" width="9" height="9" viewBox="0 0 9 9"><rect x="0.500" y="0.500" width="8" height="8" fill="#5a2b22" stroke="#ddd" stroke-width="0.800"/><rect x="2.500" y="2.500" width="4" height="4" fill="#a8503a"/></svg>
<svg class="ic" style="left:24.5px;top:299px" width="9" height="9" viewBox="0 0 9 9"><rect x="0.500" y="0.500" width="8" height="8" fill="#fff" stroke="#1e1e1e" stroke-width="0.800"/><path d="M1,8 L8,1" stroke="#d81e1e" stroke-width="1.600"/></svg>
<svg class="ic" style="left:1px;top:314px" width="9" height="9" viewBox="0 0 9 9"><rect x="0" y="0" width="9" height="9" fill="#5a5a5a" stroke="#333" stroke-width="0.600"/><circle cx="3.800" cy="3.800" r="2.500" fill="#ccc"/><rect x="4" y="4" width="3.800" height="3.800" fill="#9a9a9a" stroke="#ddd" stroke-width="0.600"/></svg>
<svg class="ic" style="left:13px;top:314px" width="9" height="9" viewBox="0 0 9 9"><rect x="0" y="0" width="9" height="9" fill="#5a5a5a" stroke="#333" stroke-width="0.600"/><circle cx="3.800" cy="3.800" r="2.500" fill="#ccc"/><rect x="4" y="4" width="3.800" height="3.800" fill="#9a9a9a" stroke="#ddd" stroke-width="0.600"/></svg>
<svg class="ic" style="left:25px;top:314px" width="9" height="9" viewBox="0 0 9 9"><rect x="0" y="0" width="9" height="9" fill="#5a5a5a" stroke="#333" stroke-width="0.600"/><circle cx="3.800" cy="3.800" r="2.500" fill="#ccc"/><rect x="4" y="4" width="3.800" height="3.800" fill="#9a9a9a" stroke="#ddd" stroke-width="0.600"/></svg>
<svg class="ic" style="left:9px;top:329px" width="14" height="12" viewBox="0 0 14 12"><rect x="3.500" y="0.500" width="10" height="7.500" fill="#777" stroke="#cdcdcd" stroke-width="1"/><rect x="0.500" y="3.500" width="10" height="7.500" fill="#666" stroke="#cdcdcd" stroke-width="1"/></svg>
<div class="a" style="left:953.7px;top:31.7px;width:13px;height:461.3px;background:#2d2d2d;"></div>
<svg class="ic" style="left:956px;top:34px" width="8" height="5" viewBox="0 0 8 5"><path d="M0,5 L4,0 L8,5 Z" fill="#f2f2f2"/></svg>
<div class="a" style="left:955px;top:247.5px;width:9.5px;height:11px;background:#8c8c8c;border:1px solid #b0b0b0;box-sizing:border-box"></div>
<div class="a" style="left:966.5px;top:17.5px;width:26.5px;height:486px;background:#474747;border-left:1px solid #2a2a2a;box-sizing:border-box"></div>
<div class="a" style="left:966.5px;top:17.5px;width:26.5px;height:8.5px;background:#2c2c2c;"></div>
<svg class="ic" style="left:983px;top:20px" width="6" height="4" viewBox="0 0 6 4"><path d="M2.500,0 L0,2 L2.500,4 Z M6,0 L3.500,2 L6,4 Z" fill="#ddd"/></svg>
<div class="a" style="left:992.5px;top:0px;width:1px;height:503px;background:#2b2b2b;"></div>
<div class="a" style="left:993.3px;top:0px;width:6.7px;height:503px;background:#fbfbfb;"></div>
<div class="a" style="left:993.8px;top:317px;width:6.2px;height:118px;background:#dadada;border:1px solid #c2c2c2;border-right:0;box-sizing:border-box"></div>
<div class="a" style="left:995px;top:372px;width:3px;height:1px;background:#9a9a9a;"></div>
<div class="a" style="left:995px;top:375px;width:3px;height:1px;background:#9a9a9a;"></div>
<div class="a" style="left:995px;top:378px;width:3px;height:1px;background:#9a9a9a;"></div>
<svg class="ic" style="left:995px;top:33px" width="5" height="3" viewBox="0 0 5 3"><path d="M0,3 L2.500,0 L5,3 Z" fill="#555"/></svg>
<div class="a" style="left:967.5px;top:26.5px;width:25px;height:1px;background:#2e2e2e;"></div>
<div class="a" style="left:973.5px;top:29.5px;width:11px;height:1.8px;background:#242424;"></div>
<div class="a" style="left:967.5px;top:90px;width:25px;height:1px;background:#2e2e2e;"></div>
<div class="a" style="left:973.5px;top:93px;width:11px;height:1.8px;background:#242424;"></div>
<div class="a" style="left:967.5px;top:151.5px;width:25px;height:1px;background:#2e2e2e;"></div>
<div class="a" style="left:973.5px;top:154.5px;width:11px;height:1.8px;background:#242424;"></div>
<div class="a" style="left:967.5px;top:211.5px;width:25px;height:1px;background:#2e2e2e;"></div>
<div class="a" style="left:973.5px;top:214.5px;width:11px;height:1.8px;background:#242424;"></div>
<div class="a" style="left:967.5px;top:255.5px;width:25px;height:1px;background:#2e2e2e;"></div>
<div class="a" style="left:973.5px;top:258.5px;width:11px;height:1.8px;background:#242424;"></div>
<div class="a" style="left:967.5px;top:281px;width:25px;height:1px;background:#2e2e2e;"></div>
<div class="a" style="left:973.5px;top:284px;width:11px;height:1.8px;background:#242424;"></div>
<div class="a" style="left:969px;top:192px;width:21px;height:17.5px;background:#2a2a2a;border:1px solid #1d1d1d;box-sizing:border-box"></div>
<svg class="ic" style="left:971.5px;top:35.5px" width="14" height="13" viewBox="0 0 14 13"><ellipse cx="7" cy="6.500" rx="6.500" ry="5" fill="#c6c6c6"/><circle cx="4" cy="6" r="1.200" fill="#474747"/><circle cx="7" cy="4" r="1.200" fill="#474747"/><circle cx="10" cy="6" r="1.200" fill="#474747"/><ellipse cx="8" cy="9" rx="2" ry="1.200" fill="#474747"/><path d="M9,1 L12.500,-1 L13.500,0.500 L10,3 Z" fill="#c6c6c6"/></svg>
<svg class="ic" style="left:971.5px;top:52.5px" width="14" height="13" viewBox="0 0 14 13"><defs><linearGradient id="rg1" x1="0" x2="1"><stop offset="0" stop-color="#eee"/><stop offset="1" stop-color="#333"/></linearGradient></defs><path d="M1,0.500 L1,12 L13,12 C12,6 7,1.500 1,0.500 Z" fill="url(#rg1)" stroke="#ddd" stroke-width="0.900"/></svg>
<svg class="ic" style="left:971.5px;top:69px" width="14" height="13" viewBox="0 0 14 13"><circle cx="6" cy="7" r="4.500" fill="none" stroke="#c6c6c6" stroke-width="1.300"/><circle cx="6" cy="7" r="1.600" fill="#c6c6c6"/><path d="M6,7 L12,1" stroke="#c6c6c6" stroke-width="1.100"/><circle cx="12" cy="1.500" r="1.500" fill="#c6c6c6"/><circle cx="11" cy="11" r="1.300" fill="#c6c6c6"/></svg>
<svg class="ic" style="left:971.5px;top:96px" width="14" height="13" viewBox="0 0 14 13"><rect x="0.500" y="1.500" width="13" height="9" fill="#bbb" stroke="#ddd" stroke-width="0.800"/><path d="M0.500,6 H13.500 M5,1.500 V10.500 M9.300,1.500 V10.500" stroke="#474747" stroke-width="0.900"/></svg>
<svg class="ic" style="left:971.5px;top:113px" width="14" height="13" viewBox="0 0 14 13"><rect x="4" y="7" width="6" height="6" fill="#c6c6c6"/><path d="M5,7 L3,1 M7,7 L7,0 M9,7 L11,1" stroke="#c6c6c6" stroke-width="1.300"/></svg>
<svg class="ic" style="left:971.5px;top:131px" width="14" height="13" viewBox="0 0 14 13"><circle cx="7" cy="3.500" r="3" fill="#c6c6c6"/><circle cx="3.500" cy="7.500" r="3" fill="#c6c6c6"/><circle cx="10.500" cy="7.500" r="3" fill="#c6c6c6"/><path d="M7,7 L5,12.500 H9 Z" fill="#c6c6c6"/></svg>
<svg class="ic" style="left:971.5px;top:156px" width="14" height="13" viewBox="0 0 14 13"><rect x="0.500" y="0.500" width="13" height="1.200" fill="#c6c6c6"/><rect x="0.500" y="3.500" width="13" height="2" fill="#c6c6c6"/><rect x="0.500" y="7.500" width="13" height="3" fill="#c6c6c6"/></svg>
<svg class="ic" style="left:971.5px;top:175px" width="14" height="13" viewBox="0 0 14 13"><defs><linearGradient id="rg2" x1="0" x2="1"><stop offset="0" stop-color="#f4f4f4"/><stop offset="1" stop-color="#333"/></linearGradient></defs><rect x="0.500" y="1" width="13" height="10" fill="url(#rg2)" stroke="#ddd" stroke-width="0.900"/></svg>
<svg class="ic" style="left:971.5px;top:194px" width="14" height="13" viewBox="0 0 14 13"><circle cx="5.500" cy="5.500" r="4.500" fill="#d0d0d0" stroke="#eee" stroke-width="0.800"/><circle cx="8.500" cy="8" r="4.500" fill="#fff" fill-opacity="0.850" stroke="#eee" stroke-width="0.800"/><circle cx="8.500" cy="8" r="2" fill="#999"/></svg>
<svg class="ic" style="left:971.5px;top:219.5px" width="14" height="13" viewBox="0 0 14 13"><circle cx="7" cy="7" r="6" fill="none" stroke="#c6c6c6" stroke-width="1.200"/><circle cx="7" cy="7" r="3.800" fill="#bbb" stroke="#eee" stroke-width="0.800"/><circle cx="7" cy="7" r="1.500" fill="#eee"/></svg>
<svg class="ic" style="left:971.5px;top:237px" width="14" height="13" viewBox="0 0 14 13"><rect x="2.500" y="0.500" width="11" height="10" rx="1.500" fill="none" stroke="#c6c6c6" stroke-width="1.200"/><rect x="0.500" y="5" width="7" height="7" rx="1" fill="#474747" stroke="#c6c6c6" stroke-width="1.200"/></svg>
<svg class="ic" style="left:971.5px;top:263px" width="14" height="13" viewBox="0 0 14 13"><path d="M7,0.500 L13.500,4 L7,7.500 L0.500,4 Z" fill="#e4e4e4"/><path d="M0.500,7.500 L7,11 L13.500,7.500 L11.500,6.400 L7,8.800 L2.500,6.400 Z" fill="#e4e4e4"/></svg>
<svg class="ic" style="left:971.5px;top:288.5px" width="14" height="13" viewBox="0 0 14 13"><rect x="0.500" y="0.500" width="9" height="9" fill="#666" stroke="#c6c6c6" stroke-width="1"/><rect x="4.500" y="4.500" width="9" height="9" fill="#777" stroke="#c6c6c6" stroke-width="1"/></svg>
<div class="a" style="left:0px;top:493px;width:1000px;height:10px;background:#474747;"></div>
<div class="a" style="left:40.8px;top:492.8px;width:926px;height:0.7px;background:#2a2a2a;"></div>
<div class="a" style="left:345.5px;top:493.5px;width:608.2px;height:9.5px;background:#2d2d2d;"></div>
<svg class="ic" style="left:46px;top:495.5px" width="11" height="7" viewBox="0 0 11 7"><rect x="0.500" y="0.500" width="10" height="6" rx="1" fill="#5a5a5a" stroke="#6d6d6d" stroke-width="0.800"/><rect x="3" y="2" width="5" height="3" fill="#6a6a6a"/></svg>
<svg class="ic" style="left:63.5px;top:494.5px" width="9" height="8" viewBox="0 0 9 8"><rect x="0.500" y="2.500" width="7" height="5" fill="#6a6a6a" stroke="#cdcdcd" stroke-width="0.900"/><path d="M3,5 C3,2 5,1.500 7,1.500 M7,1.500 l-1.500,-1.300 M7,1.500 l-1.500,1.500" fill="none" stroke="#fff" stroke-width="1"/></svg>
<div class="inp" style="left:80px;top:494px;width:26.5px;height:10px;font-size:7px;line-height:8px;background:#c6c6c6;"><span style="position:absolute;left:2px;top:0;white-space:nowrap">4627.3</span></div>
<div class="dd" style="left:107px;top:494px;width:8px;height:10px"></div>
<div class="t " style="left:120px;top:495.5px;font-size:7px;color:#6e6e6e;">|◂ &nbsp;◂</div>
<div class="inp" style="left:143px;top:494px;width:28px;height:10px;font-size:7.5px;line-height:8px;background:#a8a8a8;"><span style="position:absolute;left:2px;top:0;white-space:nowrap">1</span></div>
<div class="dd" style="left:171.5px;top:494px;width:8px;height:10px"></div>
<div class="t " style="left:185px;top:495.5px;font-size:7px;color:#6e6e6e;">▸ &nbsp;▸|</div>
<div class="t " style="left:262px;top:495px;font-size:8.2px;color:#cdcdcd;">选择</div>
<svg class="ic" style="left:338px;top:496px" width="4" height="6" viewBox="0 0 4 6"><path d="M0,0 L4,3 L0,6 Z" fill="#9a9a9a"/></svg>
<svg class="ic" style="left:348.5px;top:495.5px" width="5" height="7" viewBox="0 0 5 7"><path d="M5,0 L0,3.500 L5,7 Z" fill="#f2f2f2"/></svg>
<div class="a" style="left:641px;top:494px;width:9.5px;height:9px;background:#8a8a8a;border:1px solid #a5a5a5;box-sizing:border-box"></div>
<div class="a" style="left:889px;top:490px;width:65px;height:13px;background:#f3d9bc;"></div>
<svg class="ic" style="left:872px;top:480px" width="40" height="23" viewBox="0 0 40 23"><circle cx="17" cy="21.500" r="15.500" fill="#f3f3ee"/><circle cx="17" cy="21.500" r="13.500" fill="#17835a"/><path d="M5,15.500 A13.500,13.500 0 0 1 29,15.500 Z" fill="#2f9a6e" fill-opacity="0.700"/><text x="17" y="22.500" font-family="Liberation Sans, sans-serif" font-size="9.500" fill="#fff" text-anchor="middle">26%</text><path d="M33,16 l2,5 M36,17 l1.500,5" stroke="#c9b59a" stroke-width="1"/></svg>
<svg class="ic" style="left:938px;top:490px" width="16" height="13" viewBox="0 0 16 13"><circle cx="9.500" cy="4.500" r="3" fill="#d24545"/><path d="M2,13 L5,6 L11,7 L13,13 Z" fill="#3b7fd6"/><path d="M6,9 h3 M7.500,7.500 v4" stroke="#fff" stroke-width="0.900"/></svg>
<div class="a" style="left:953.5px;top:479px;width:21.5px;height:14.5px;background:#fcfcfc;"></div>
<svg class="ic" style="left:954px;top:481px" width="7" height="11" viewBox="0 0 7 11"><circle cx="3.500" cy="2.500" r="1.800" fill="#8fc9cf"/><path d="M1,5 h5 l-1,5 h-3 z" fill="#9fd3d6"/></svg>
<svg class="ic" style="left:962px;top:481px" width="11" height="11" viewBox="0 0 11 11"><path d="M1.500,10.500 L6,5.500 C5,3.500 6.500,1 9.500,1.500 L7.800,3.300 L8.700,4.700 L10.500,3.500 C10.800,6 8.500,7.300 7,6.700 L2.800,11.300 Z" fill="#3a3a3a"/></svg>
<div class="a" style="left:816px;top:147.8px;width:147.5px;height:82px;background:#474747;border:1px solid #262626;box-sizing:border-box"></div>
<div class="a" style="left:817px;top:148.8px;width:145.5px;height:12.7px;background:#2e2e2e;"></div>
<div class="t " style="left:822px;top:152px;font-size:8px;color:#8a8a8a;">描边</div>
<div class="a" style="left:842px;top:151px;width:1px;height:9px;background:#3d3d3d;"></div>
<div class="t " style="left:846.5px;top:152px;font-size:8px;color:#8a8a8a;">渐变</div>
<div class="a" style="left:866px;top:150px;width:37px;height:11.5px;background:#474747;border:1px solid #5a5a5a;border-bottom:0;box-sizing:border-box"></div>
<div class="t " style="left:868px;top:152px;font-size:7px;color:#ddd;">◇</div>
<div class="t " style="left:874.5px;top:152px;font-size:8px;color:#efefef;">透明度</div>
<svg class="ic" style="left:939.5px;top:152px" width="7" height="5" viewBox="0 0 7 5"><path d="M0,0 L3,2.500 L0,5 Z M3.500,0 L6.500,2.500 L3.500,5 Z" fill="#e6e6e6"/></svg>
<div class="a" style="left:949.5px;top:151px;width:1px;height:8px;background:#555;"></div>
<svg class="ic" style="left:953px;top:152px" width="9" height="6" viewBox="0 0 9 6"><path d="M0,1 L3,1 L1.500,3 Z" fill="#ddd"/><path d="M4,0.500 H9 M4,2.800 H9 M4,5 H9" stroke="#ddd" stroke-width="1"/></svg>
<div class="a" style="left:822px;top:167px;width:52px;height:11.5px;background:#4f4f4f;border:1px solid #2a2a2a;box-sizing:border-box;outline:1px solid #5e5e5e"></div>
<div class="t " style="left:826px;top:169px;font-size:7.8px;color:#f0f0f0;font-weight:bold">正片叠底</div>
<div class="a" style="left:864.5px;top:168px;width:1px;height:9.5px;background:#2e2e2e;"></div>
<svg class="ic" style="left:866.5px;top:171px" width="6" height="4" viewBox="0 0 6 4"><path d="M0,0 H6 L3,4 Z" fill="#f0f0f0"/></svg>
<div class="t " style="left:879.5px;top:169px;font-size:8px;color:#f0f0f0;font-weight:bold;letter-spacing:0.3px">不透明度:</div>
<div class="inp" style="left:918px;top:166.5px;width:33.5px;height:11.5px;font-size:8px;line-height:9.5px;background:#ababab;"><span style="position:absolute;left:2px;top:0;white-space:nowrap">28%</span></div>
<div class="a" style="left:953px;top:167px;width:8px;height:11px;background:#5e5e5e;border:1px solid #2e2e2e;box-sizing:border-box"></div>
<svg class="ic" style="left:955px;top:169.5px" width="4" height="6" viewBox="0 0 4 6"><path d="M0,0 L4,3 L0,6 Z" fill="#f2f2f2"/></svg>
<svg class="ic" style="left:822.5px;top:190.5px" width="31" height="32" viewBox="0 0 31 32"><rect x="0.500" y="0.500" width="30" height="31" fill="#fff" stroke="#333" stroke-width="0.800"/><path d="M6.300,12.500 C10,13.500 13,14.500 16,14.500 C15,10 13,6 11.300,2.700 C15,6 20,11 22.500,13.500 C25,17 26,20 25.200,22 C24,26 21,29 18,28.800 C15,28 14,25 13.500,22.500 C12.500,18 10,15 6.300,12.500 Z" fill="#f0c59b"/><path d="M6.300,12.500 C10,13.500 13,14.500 16,14.500 C15,10 13,6 11.300,2.700 M6.300,12.500 C10,15 12.500,18 13.500,22.500" stroke="#a9b6dd" stroke-width="0.600" fill="none"/></svg>
<div class="a" style="left:870.5px;top:190px;width:32.5px;height:33px;background:#474747;border:1px solid #777;box-sizing:border-box"></div>
<svg class="ic" style="left:879.4px;top:198.3px" width="16" height="16" viewBox="0 0 16 16"><circle cx="8" cy="8" r="6.500" fill="none" stroke="#b4b4b4" stroke-width="2"/><path d="M3.500,3.500 L12.500,12.500" stroke="#b4b4b4" stroke-width="2"/></svg>
<div class="a" style="left:908px;top:189px;width:44.5px;height:11px;background:#5d5d5d;border:1px solid #6e6e6e;box-sizing:border-box"></div>
<div class="t " style="left:914.5px;top:191px;font-size:8px;color:#f2f2f2;font-weight:bold">制作蒙版</div>
<div class="a" style="left:911px;top:205.5px;width:4.5px;height:4.5px;background:#4c4c4c;border:1px solid #5a5a5a;box-sizing:border-box"></div>
<div class="t " style="left:918.5px;top:204px;font-size:7.8px;color:#6c6c6c;">剪切</div>
<div class="a" style="left:911px;top:217.5px;width:4.5px;height:4.5px;background:#4c4c4c;border:1px solid #5a5a5a;box-sizing:border-box"></div>
<div class="t " style="left:918.5px;top:216px;font-size:7.8px;color:#6c6c6c;">反相蒙版</div>
</body></html>
